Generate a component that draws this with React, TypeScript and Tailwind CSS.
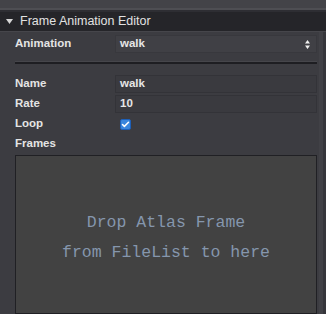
import { Check } from "lucide-react";

const LABEL = "w-[100px] shrink-0 text-[11.5px] font-bold text-[#e4e4e4]";

function Field({ label, value }: { label: string; value: string }) {
  return (
    <div className="flex h-[20px] items-center">
      <span className={LABEL}>{label}</span>
      <div className="flex h-[18px] flex-1 items-center border border-[#333338] bg-[#3a3a3f] px-[4px] text-[11.5px] font-bold text-[#e6e6e6]">
        {value}
      </div>
    </div>
  );
}

export default function App() {
  return (
    <div className="flex h-[314px] w-[326px] flex-col overflow-hidden bg-[#3c3c41] font-['Liberation_Sans',Arial,sans-serif]">
      {/* strip of the panel above */}
      <div className="h-[8px] shrink-0 bg-[#434348]" />
      <div className="h-[2px] shrink-0 bg-[#4e4e53]" />
      <div className="h-[2px] shrink-0 bg-[#2e2e33]" />

      {/* section header */}
      <div className="flex h-[19px] shrink-0 items-center gap-[7px] bg-[#252529] pl-[6px] text-[12.5px] text-[#e2e2e2]">
        <svg width="7" height="5" viewBox="0 0 7 5" aria-hidden>
          <path d="M0 0h7L3.5 5z" fill="#d6d6d6" />
        </svg>
        Frame Animation Editor
      </div>
      <div className="h-[1px] shrink-0 bg-[#46464b]" />

      <div className="flex flex-1 pl-[15px]">
        <div className="flex flex-1 flex-col">
          {/* Animation select */}
          <div className="mt-[2px] flex h-[20px] items-center">
            <span className={LABEL}>Animation</span>
            <div className="flex h-[18px] flex-1 items-center justify-between border border-[#38383d] bg-[#404045] pl-[4px] pr-[6px] text-[11.5px] font-bold text-[#e6e6e6]">
              walk
              <svg width="5" height="9" viewBox="0 0 5 9" aria-hidden>
                <path d="M0 3.5L2.5 0L5 3.5z M0 5.5L2.5 9L5 5.5z" fill="#f0f0f0" />
              </svg>
            </div>
          </div>

          {/* divider */}
          <div className="mt-[7px] h-[1px] bg-[#46464b]" />
          <div className="h-[2px] bg-[#1e1e22]" />

          <div className="mt-[10px] flex flex-col">
            <Field label="Name" value="walk" />
            <Field label="Rate" value="10" />
            <div className="flex h-[20px] items-center">
              <span className={LABEL}>Loop</span>
              <span className="ml-[5px] flex h-[11px] w-[11px] items-center justify-center rounded-[2px] border border-[#1d5fb8] bg-[#3a86dd]">
                <Check className="h-[9px] w-[9px] text-white" strokeWidth={4} />
              </span>
            </div>
            <div className="flex h-[20px] items-center">
              <span className={LABEL}>Frames</span>
            </div>
          </div>

          {/* drop area */}
          <div className="mt-[1px] flex flex-1 flex-col items-center justify-center border border-[#202024] bg-[#424242] pt-[6px] font-['Liberation_Mono',monospace] text-[16.5px] leading-[30px] text-[#8596ad]">
            <span>Drop Atlas Frame</span>
            <span>from FileList to here</span>
          </div>
        </div>

        {/* right scrollbar gutter */}
        <div className="ml-[2px] w-[4px] shrink-0 bg-[#414146]" />
        <div className="w-[3px] shrink-0 bg-[#36363b]" />
      </div>
    </div>
  );
}
